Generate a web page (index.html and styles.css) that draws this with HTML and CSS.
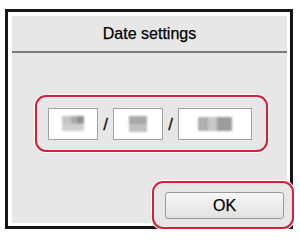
FILE: index.html
```html
<!DOCTYPE html>
<html lang="en">
  <head>
    <meta charset="UTF-8" />
    <title>Date settings</title>
    <link rel="stylesheet" href="styles.css">
  </head>
  <body>
    <div class="frame">
      <div class="panel">
        <div class="title">Date settings</div>

        <div class="mark date-mark">
          <div class="field"><span class="blur blur-day"></span></div>
          <span class="slash">/</span>
          <div class="field"><span class="blur blur-month"></span></div>
          <span class="slash">/</span>
          <div class="field field-year"><span class="blur blur-year"></span></div>
        </div>

        <div class="actions">
          <div class="mark ok-mark">
            <button class="ok">OK</button>
          </div>
        </div>
      </div>
    </div>
  </body>
</html>
```

FILE: styles.css
```css
* {
  box-sizing: border-box;
}

body {
  margin: 0;
  background: #fff;
  font-family: "Liberation Sans", Arial, sans-serif;
}

.frame {
  margin: 9px 0 0 5px;
  width: 288px;
  height: 220px;
  border: 3px solid #161616;
  padding: 4px 3px 3px 4px;
  background: #fff;
}

.panel {
  height: 100%;
  background: #e7e7e7;
  display: flex;
  flex-direction: column;
}

.title {
  height: 37px;
  border-bottom: 2px solid #7a7a7a;
  display: flex;
  align-items: center;
  justify-content: center;
  font-size: 16px;
  color: #000;
  padding-top: 1px;
  -webkit-text-stroke: 0.25px #000;
}

.mark {
  border: 2px solid #d2203f;
  border-radius: 11px;
  box-shadow: 0 0 0 1px #fff;
}

.date-mark {
  align-self: flex-start;
  margin: 42px 0 0 23px;
  width: 233px;
  height: 57px;
  display: flex;
  align-items: center;
  padding: 0 0 0 11px;
}

.field {
  width: 50px;
  height: 32px;
  background: #fff;
  border: 1px solid #a0a0a0;
  display: flex;
  align-items: center;
  justify-content: center;
}

.field-year {
  width: 74px;
}

.slash {
  width: 15px;
  text-align: center;
  font-size: 17px;
  color: #111;
  padding-top: 2px;
  -webkit-text-stroke: 0.3px #111;
}

.blur {
  display: block;
  filter: blur(1px);
}

.blur-day {
  width: 22px;
  height: 15px;
  background: linear-gradient(90deg, #c4c4c4 0 40%, #a9a9a9 40% 70%, #8f8f8f 70%);
  background-size: 100% 50%;
  background-repeat: no-repeat;
  background-color: #cfcfcf;
}

.blur-month {
  width: 18px;
  height: 16px;
  background: linear-gradient(180deg, #a8a8a8 0 50%, #c0c0c0 50%);
}

.blur-year {
  width: 34px;
  height: 14px;
  background: linear-gradient(90deg, #b0b0b0 0 30%, #c8c8c8 30% 55%, #9c9c9c 55%);
}

.actions {
  margin-top: auto;
  display: flex;
  justify-content: flex-end;
  margin-right: -7px;
  margin-bottom: -6px;
}

.ok-mark {
  width: 142px;
  height: 48px;
  padding: 9px 8px 8px 11px;
  background: #e7e7e7;
}

.ok {
  width: 100%;
  height: 100%;
  border: 1px solid #9a9a9a;
  border-radius: 3px;
  background: linear-gradient(#f7f7f7, #e2e2e2);
  font-family: "Liberation Sans", Arial, sans-serif;
  font-size: 16px;
  color: #000;
  padding: 0;
  -webkit-text-stroke: 0.25px #000;
}
```
